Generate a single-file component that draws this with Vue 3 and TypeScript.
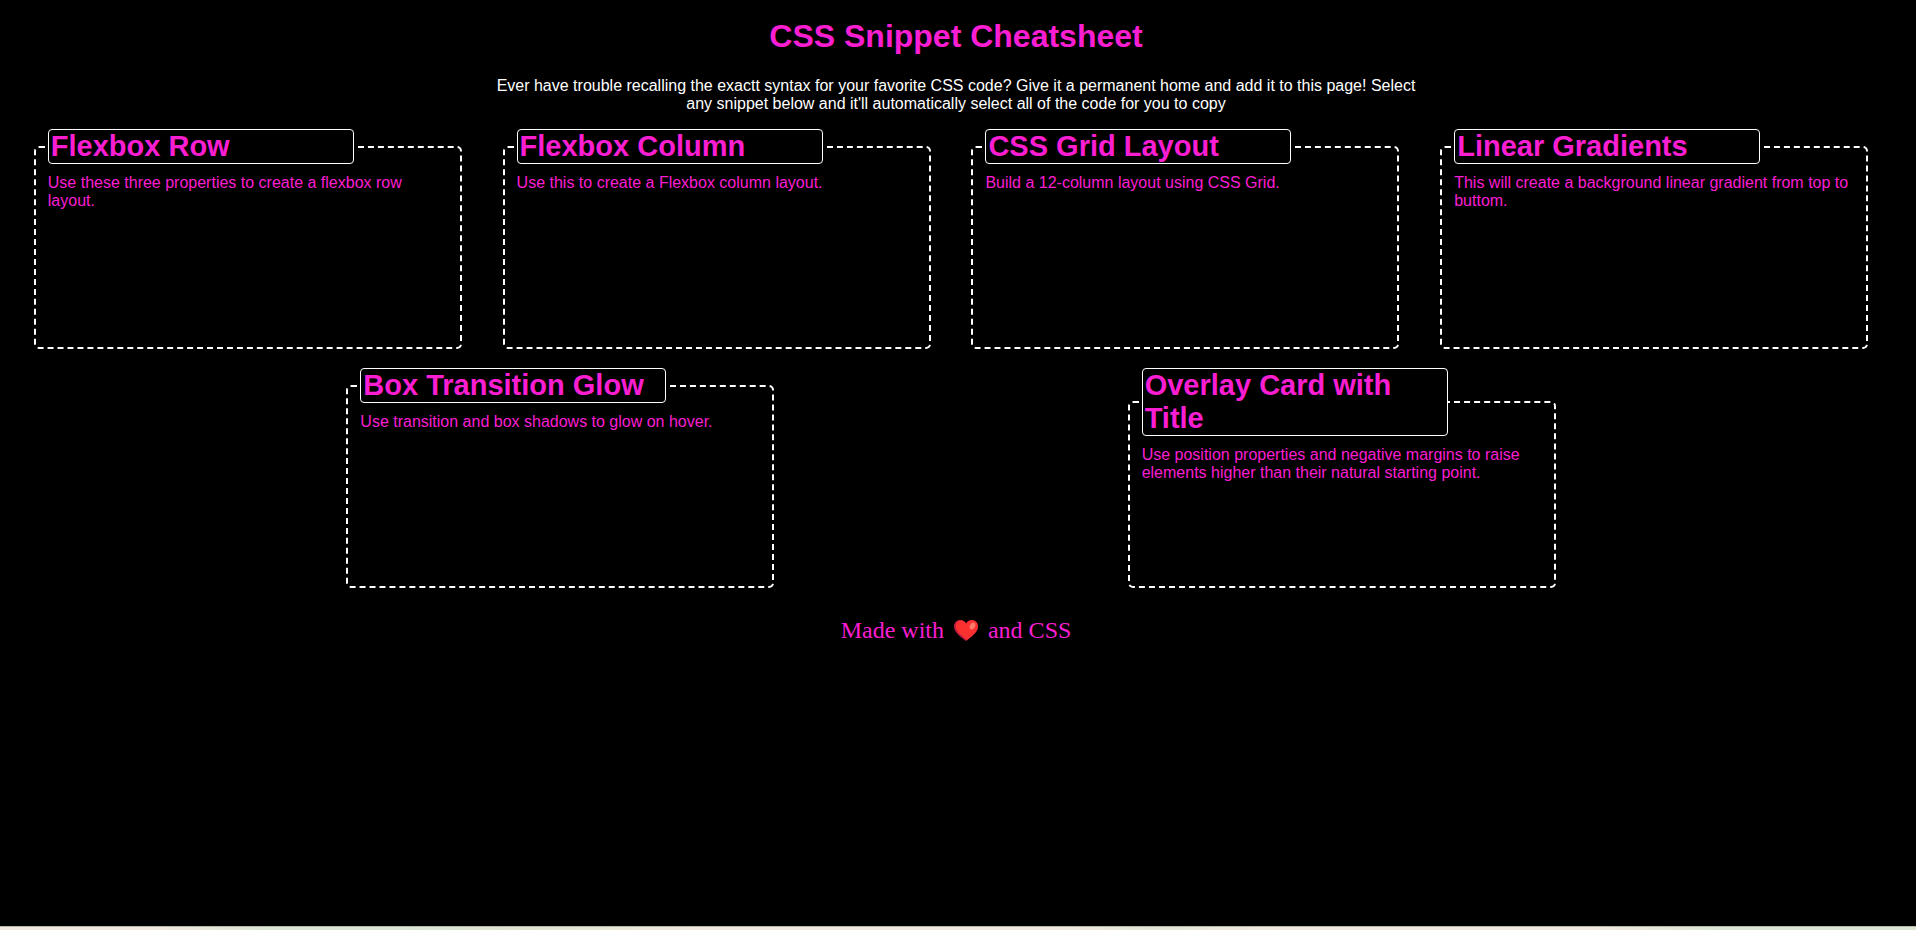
<script setup lang="ts">
interface Snippet {
  title: string
  description: string
}

const snippets: Snippet[] = [
  { title: 'Flexbox Row', description: 'Use these three properties to create a flexbox row layout.' },
  { title: 'Flexbox Column', description: 'Use this to create a Flexbox column layout.' },
  { title: 'CSS Grid Layout', description: 'Build a 12-column layout using CSS Grid.' },
  { title: 'Linear Gradients', description: 'This will create a background linear gradient from top to buttom.' },
  { title: 'Box Transition Glow', description: 'Use transition and box shadows to glow on hover.' },
  { title: 'Overlay Card with Title', description: 'Use position properties and negative margins to raise elements higher than their natural starting point.' },
]
</script>

<template>
  <div class="page">
    <header class="intro">
      <h1>CSS Snippet Cheatsheet</h1>
      <p>
        Ever have trouble recalling the exactt syntax for your favorite CSS code? Give it a permanent
        home and add it to this page! Select any snippet below and it'll automatically select all of
        the code for you to copy
      </p>
    </header>

    <main class="cards">
      <fieldset v-for="snippet in snippets" :key="snippet.title" class="card">
        <legend>{{ snippet.title }}</legend>
        <p>{{ snippet.description }}</p>
      </fieldset>
    </main>

    <footer class="credit">
      <span>Made with</span>
      <svg class="heart" viewBox="0 0 24 21" role="img" aria-label="love">
        <path d="M12 21C9 18.500 0 13 0 6.500C0 2.500 2.800 0 6.200 0C8.800 0 11 1.300 12 3.500C13 1.300 15.200 0 17.800 0C21.200 0 24 2.500 24 6.500C24 13 15 18.500 12 21Z" fill="#c41c45" />
        <path d="M13 20C10 17.500 1.800 12 1.800 6.300C1.800 2.800 4 .4 7 .4C9.500 .4 11.400 2 12.400 4C13.300 1.600 15.300 .2 17.800 .2C21.200 .2 23.900 2.600 23.900 6.500C23.900 12.500 16 17.500 13 20Z" fill="#fa312f" />
        <ellipse cx="18.500" cy="6" rx="2.500" ry="3.700" transform="rotate(28 18.500 6)" fill="#fb7a6c" />
      </svg>
      <span>and CSS</span>
    </footer>

    <div class="strip"></div>
  </div>
</template>

<style>
body {
  margin: 0;
  background: #000;
}
</style>

<style scoped>
.page {
  min-height: 100vh;
  box-sizing: border-box;
  display: flex;
  flex-direction: column;
  background: #000;
  color: #fa1ed2;
  font-family: "Liberation Sans", Arial, sans-serif;
  font-size: 16px;
  line-height: 18px;
}

.intro {
  padding: 18px 4px 0 0;
  text-align: center;
}

h1 {
  margin: 0;
  font-size: 32px;
  line-height: 36px;
}

.intro p {
  max-width: 940px;
  margin: 23px auto 0;
  color: #fff;
}

.cards {
  display: flex;
  flex-wrap: wrap;
  justify-content: space-evenly;
  row-gap: 19px;
  padding: 16px 14px 0 0;
}

.card {
  box-sizing: border-box;
  width: 428px;
  min-height: 220px;
  margin: 0 7px;
  padding: 0 12px 12px;
  border: 2px dashed #fff;
  border-radius: 5px;
}

.card legend {
  box-sizing: border-box;
  width: 306px;
  padding: 0 2px;
  border: 1px solid #fff;
  border-radius: 4px;
  font-size: 29px;
  font-weight: 700;
  line-height: 33px;
}

.card p {
  margin: 10px 0 0;
}

.credit {
  display: flex;
  justify-content: center;
  align-items: center;
  gap: 10px;
  padding: 28px 4px 0 0;
  font-family: "Liberation Serif", "Times New Roman", serif;
  font-size: 24px;
  line-height: 28px;
}

.heart {
  width: 24px;
  height: 21px;
}

.strip {
  height: 3px;
  margin-top: auto;
  border-top: 1px solid #b4b8aa;
  background: linear-gradient(
    90deg,
    #f3e9dd 0%,
    #f4e8de 8%,
    #dbe6d3 14%,
    #dbe6d3 21%,
    #dfe5cf 27%,
    #f3e9dd 37%,
    #f3e9dd 55%,
    #e3e6d6 60%,
    #f3e9dd 67%,
    #f3e9dd 83%,
    #dbe6d3 90%,
    #dbe6d3 100%
  );
}
</style>
